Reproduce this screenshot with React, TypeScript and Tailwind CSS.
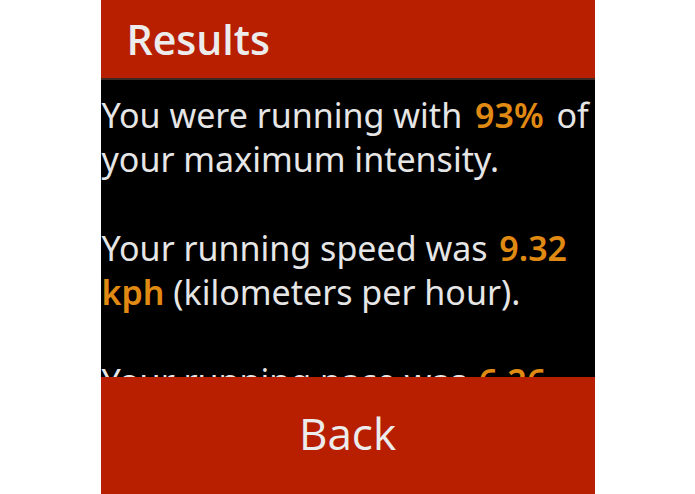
export default function App() {
  return (
    <div className="flex min-h-screen justify-center bg-white" style={{ fontFamily: '"Open Sans", "Noto Sans", sans-serif' }}>
      <div className="flex h-[494px] w-[494px] flex-col overflow-hidden bg-black">
        {/* Header */}
        <div className="flex h-[78px] shrink-0 items-center bg-[#b71f00] pl-[26px]">
          <h1 className="text-[41px] font-semibold leading-none text-[#ececec]">Results</h1>
        </div>
        <div className="h-[2px] shrink-0 bg-[#3b2a22]" />

        {/* Content */}
        <div className="min-h-0 flex-1 overflow-hidden">
          <div
            className="w-[515px] pl-[1px] pt-[13px] text-[34px] leading-[44.3px] text-[#e6e6e6]"
            style={{ fontFamily: '"Noto Sans", "Open Sans", sans-serif' }}
          >
            <p>
              You were running with <span className="mx-[4px] font-semibold text-[#e08a14]">93%</span> of your maximum intensity.
            </p>
            <br />
            <p>
              Your running speed was <span className="ml-[3px] font-semibold text-[#e08a14]">9.32 kph</span> (kilometers per hour).
            </p>
            <br />
            <p>
              Your running pace was <span className="ml-[3px] font-semibold text-[#e08a14]">6.26 min/km</span>.
            </p>
          </div>
        </div>

        {/* Back button */}
        <button className="flex h-[117px] shrink-0 items-center justify-center bg-[#b71f00] pb-[6px] text-[44px] leading-none text-[#ececec]">
          Back
        </button>
      </div>
    </div>
  );
}
